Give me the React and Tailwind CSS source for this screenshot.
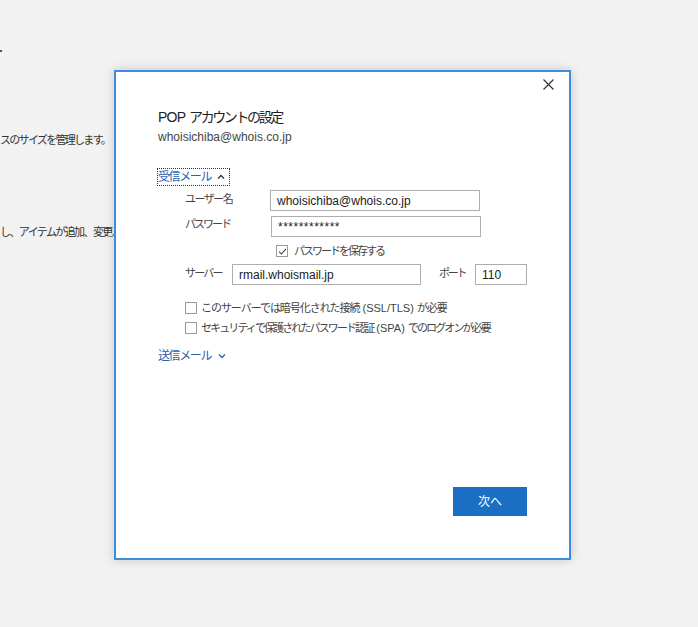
import React, { useState } from "react";

const font = { fontFamily: '"Liberation Sans", "Noto Sans CJK JP", sans-serif' };

const Check = ({ checked, onChange }) => (
  <span
    onClick={onChange}
    className="w-[12px] h-[12px] border border-[#9a9a9a] bg-white flex items-center justify-center cursor-pointer shrink-0"
  >
    {checked && (
      <svg width="9" height="9" viewBox="0 0 9 9">
        <path d="M1 4.6 L3.4 7 L8 1.8" fill="none" stroke="#444" strokeWidth="1.1" />
      </svg>
    )}
  </span>
);

const Field = ({ value, className }) => (
  <div
    className={`h-[21px] border border-[#adadad] bg-white flex items-center px-[6px] text-[12px] text-[#222] shrink-0 ${className}`}
  >
    {value}
  </div>
);

const App = () => {
  const [savePw, setSavePw] = useState(true);
  const [ssl, setSsl] = useState(false);
  const [spa, setSpa] = useState(false);

  return (
    <div className="relative w-[698px] h-[627px] bg-[#f2f2f2] overflow-hidden text-[#333]" style={font}>
      {/* background window text */}
      <div className="pt-[40px] text-[11px] leading-[16px] text-[#333] whitespace-nowrap">
        <div className="h-[10px]">
          <span className="inline-block w-[2px] h-[2px] bg-[#555] mt-[6px]" />
        </div>
        <div className="mt-[82px] tracking-[-1.7px]">スのサイズを管理します。</div>
        <div className="mt-[76px] tracking-[-1.6px]">し、アイテムが追加、変更、</div>
      </div>

      {/* dialog */}
      <div className="absolute left-[114px] top-[70px] w-[457px] h-[490px] bg-white border-2 border-[#3c8ddb] shadow-[0_0_10px_rgba(0,0,0,0.18)] flex flex-col">
        <button className="absolute right-[13px] top-[4px] w-[16px] h-[16px] flex items-center justify-center">
          <svg width="11" height="11" viewBox="0 0 11 11">
            <path d="M0.5 0.5 L10.5 10.5 M10.5 0.5 L0.5 10.5" stroke="#333" strokeWidth="1.2" />
          </svg>
        </button>

        <div className="pl-[42px] pt-[35px] whitespace-nowrap">
          <div className="text-[14px] leading-[20px] text-[#222]">
            <span className="tracking-[-0.8px]">POP</span>{" "}
            <span className="tracking-[-2.4px]">アカウントの設定</span>
          </div>
          <div className="mt-[1px] text-[12px] leading-[18px] text-[#444]">whoisichiba@whois.co.jp</div>

          <div className="mt-[22px] -ml-[1px] flex w-fit items-center gap-[6px] h-[18px] border border-dotted border-[#333] pr-[4px] text-[12px] text-[#2862ad]">
            <span className="tracking-[-1.4px]">受信メール</span>
            <svg width="8" height="6" viewBox="0 0 8 6">
              <path d="M1 4.5 L4 1.5 L7 4.5" fill="none" stroke="#333" strokeWidth="1.3" />
            </svg>
          </div>

          <div className="pl-[27px] text-[11px] text-[#444]">
            <div className="mt-[4px] flex items-center h-[21px]">
              <span className="w-[85px] tracking-[-1.5px] -mt-[3px]">ユーザー名</span>
              <Field value="whoisichiba@whois.co.jp" className="w-[210px]" />
            </div>
            <div className="mt-[5px] flex items-start h-[21px]">
              <span className="w-[86px] leading-[16px] tracking-[-2px]">パスワード</span>
              <Field value={<span className="tracking-[0.5px] text-[12px]">************</span>} className="w-[210px]" />
            </div>
            <div className="mt-[8px] h-[12px] flex items-center pl-[91px] gap-[6px]">
              <Check checked={savePw} onChange={() => setSavePw(!savePw)} />
              <span className="tracking-[-2px]">パスワードを保存する</span>
            </div>
            <div className="mt-[7px] flex items-center h-[21px]">
              <span className="w-[47px] tracking-[-1.8px] -mt-[3px]">サーバー</span>
              <Field value="rmail.whoismail.jp" className="w-[189px]" />
              <span className="ml-[18px] w-[36px] tracking-[-2.3px] -mt-[3px]">ポート</span>
              <Field value="110" className="w-[52px]" />
            </div>
            <div className="mt-[17px] h-[12px] flex items-center gap-[4px]">
              <Check checked={ssl} onChange={() => setSsl(!ssl)} />
              <span>
                <span className="tracking-[-1.05px]">このサーバーでは暗号化された接続</span> (SSL/TLS){" "}
                <span className="tracking-[-1.05px]">が必要</span>
              </span>
            </div>
            <div className="mt-[8px] h-[12px] flex items-center gap-[4px]">
              <Check checked={spa} onChange={() => setSpa(!spa)} />
              <span>
                <span className="tracking-[-1.9px]">セキュリティで保護されたパスワード認証</span> (SPA){" "}
                <span className="tracking-[-1.9px]">でのログオンが必要</span>
              </span>
            </div>
          </div>

          <div className="mt-[13px] flex items-center gap-[7px] h-[18px] text-[12px] text-[#2862ad]">
            <span className="tracking-[-1.4px]">送信メール</span>
            <svg width="8" height="6" viewBox="0 0 8 6">
              <path d="M1 1.5 L4 4.5 L7 1.5" fill="none" stroke="#2862ad" strokeWidth="1.3" />
            </svg>
          </div>
        </div>

        <button className="mt-auto self-end mr-[42px] mb-[42px] w-[74px] h-[29px] bg-[#1a6ec4] text-white text-[12px]">
          次へ
        </button>
      </div>
    </div>
  );
};

export default App;
